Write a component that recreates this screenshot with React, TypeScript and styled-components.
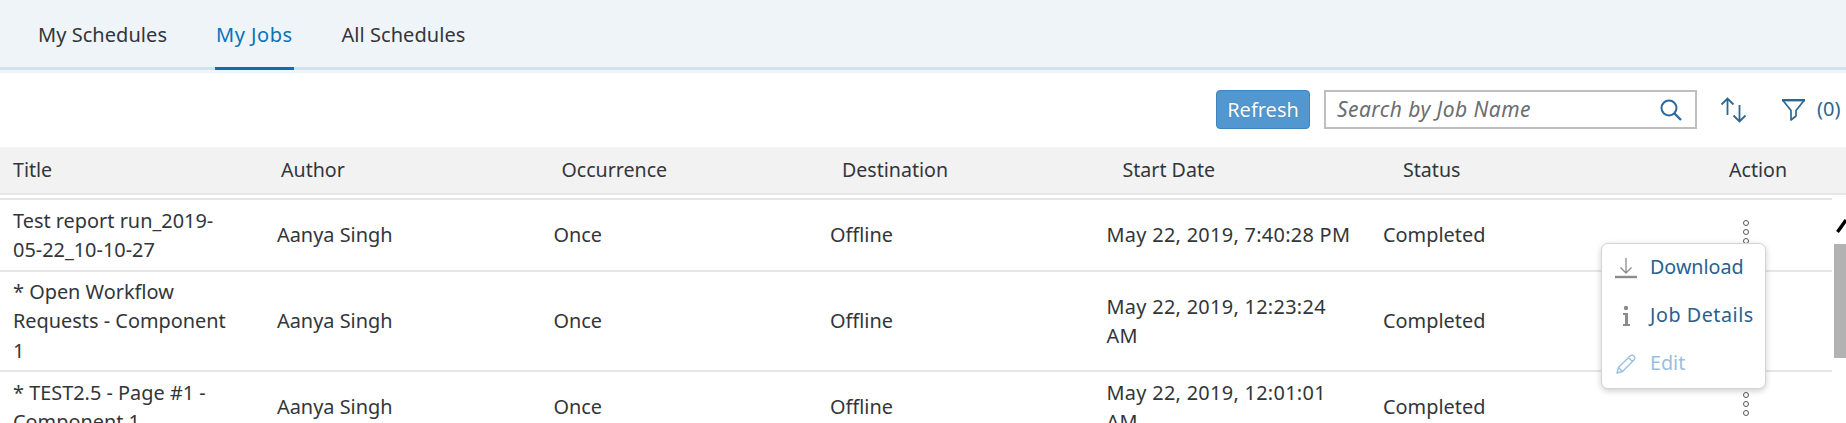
import React from "react";
import styled, { createGlobalStyle } from "styled-components";

const Global = createGlobalStyle`
  html, body { margin: 0; padding: 0; height: 423px; overflow: hidden; background: #fff; }
  body { font-family: "Noto Sans", "Open Sans", sans-serif; color: #32363a; }
  * { box-sizing: border-box; }
`;

const Page = styled.div`
  position: relative;
  width: 1846px;
  height: 423px;
  overflow: hidden;
  display: flex;
  flex-direction: column;
`;

const TabBar = styled.nav`
  height: 73px;
  flex: none;
  background: #eff4f9;
  padding-bottom: 3px;
  display: flex;
`;

const TabLine = styled.div`
  display: flex;
  gap: 47px;
  flex: 1;
  padding-left: 37px;
  border-bottom: 3px solid #d3e0ee;
`;

const Tab = styled.div<{ $active?: boolean }>`
  height: 70px;
  line-height: 70px;
  padding: 0 1px;
  font-size: 20px;
  white-space: nowrap;
  letter-spacing: ${(p) => (p.$active ? "0.5px" : "0.05px")};
  color: ${(p) => (p.$active ? "#0a72b8" : "#32363a")};
  border-bottom: 3px solid ${(p) => (p.$active ? "#0a6eb4" : "transparent")};
`;

const Toolbar = styled.div`
  height: 74px;
  flex: none;
  padding: 17px 5px 0 1216px;
  display: flex;
  align-items: flex-start;
`;

const RefreshButton = styled.button`
  width: 94px;
  height: 39px;
  padding: 0 0 1px;
  border: 1px solid #3f84bd;
  border-radius: 4px;
  background: #5297d0;
  color: #fff;
  font: 20px "Noto Sans", sans-serif;
  text-shadow: 0 0 1px rgba(0, 0, 0, 0.3);
`;

const SearchBox = styled.div`
  width: 373px;
  height: 39px;
  margin-left: 14px;
  border: 2px solid #bfbfbf;
  padding: 0 12px 0 11px;
  display: flex;
  align-items: center;
  justify-content: space-between;
`;

const Placeholder = styled.span`
  font-size: 21px;
  line-height: 28px;
  margin-top: -2px;
  letter-spacing: 0.45px;
  font-style: italic;
  color: #6a6d70;
`;

const IconButton = styled.span<{ $left: number }>`
  display: flex;
  align-items: center;
  height: 39px;
  margin-left: ${(p) => p.$left}px;
  color: #2b6a9c;
  font-size: 20px;
`;

const FilterCount = styled.span`
  margin-left: 12px;
  margin-top: -2px;
  color: #2f6690;
`;

const HeaderRow = styled.div`
  height: 48px;
  flex: none;
  background: #f2f2f2;
  border-bottom: 2px solid #e6e6e6;
  padding: 0 0 2px 13px;
  display: grid;
  grid-template-columns: 268px repeat(4, 280.5px) 326px 1fr;
  align-items: center;
  font-size: 19.6px;
  color: #32363a;
`;

const BodyWrap = styled.div`
  flex: 1;
  min-height: 0;
  display: flex;
  padding-top: 3px;
`;

const Rows = styled.div`
  width: 1832px;
  flex: none;
  border-top: 2px solid #e6e6e6;
`;

const Row = styled.div<{ $height: number }>`
  height: ${(p) => p.$height}px;
  flex: none;
  padding-left: 13px;
  display: grid;
  grid-template-columns: 264px repeat(4, 276.5px) 360px 1fr;
  align-items: center;
  font-size: 19.9px;
  line-height: 29.5px;
  border-bottom: 2px solid #e6e6e6;
`;

const TitleCell = styled.div`
  max-width: 222px;
`;

const DateCell = styled.div`
  max-width: 252px;
  letter-spacing: 0.3px;
`;

const Dots = styled.span`
  display: flex;
  flex-direction: column;
  gap: 3px;
  width: 6px;
  margin-top: -6px;
`;

const Dot = styled.i`
  display: block;
  width: 6px;
  height: 6px;
  border-radius: 50%;
  border: 1.7px solid #55585b;
`;

const Scrollbar = styled.div`
  flex: 1;
  padding: 20px 0 0 2px;
  display: flex;
  flex-direction: column;
`;

const Chevron = styled.svg`
  display: block;
  margin-bottom: 11px;
`;

const Thumb = styled.div`
  height: 114px;
  background: #b2b2b2;
`;

const Menu = styled.div`
  position: absolute;
  left: 1601px;
  top: 243px;
  width: 165px;
  height: 146px;
  background: #fff;
  border: 1px solid #d4d4d4;
  border-radius: 7px;
  box-shadow: 0 2px 6px rgba(0, 0, 0, 0.2);
  display: flex;
  flex-direction: column;
`;

const MenuItem = styled.div<{ $disabled?: boolean }>`
  height: 48.3px;
  display: flex;
  align-items: center;
  font-size: 19.7px;
  padding-left: 13px;
  color: ${(p) => (p.$disabled ? "#9abfde" : "#2b5f8f")};
`;

const MenuIcon = styled.span`
  width: 35px;
  flex: none;
  display: flex;
`;

const MenuLabel = styled.span<{ $wide?: boolean }>`
  margin-top: -3px;
  letter-spacing: ${(p) => (p.$wide ? "0.55px" : "0")};
`;

const rows = [
  { h: 72, title: "Test report run_2019-05-22_10-10-27", date: "May 22, 2019, 7:40:28 PM" },
  { h: 100, title: "* Open Workflow Requests - Component 1", date: "May 22, 2019, 12:23:24 AM" },
  { h: 72, title: "* TEST2.5 - Page #1 - Component 1", date: "May 22, 2019, 12:01:01 AM" },
];

export default function App() {
  return (
    <Page>
      <Global />
      <TabBar>
        <TabLine>
          <Tab>My Schedules</Tab>
          <Tab $active>My Jobs</Tab>
          <Tab>All Schedules</Tab>
        </TabLine>
      </TabBar>
      <Toolbar>
        <RefreshButton>Refresh</RefreshButton>
        <SearchBox>
          <Placeholder>Search by Job Name</Placeholder>
          <svg width="24" height="24" viewBox="0 0 24 24" fill="none" stroke="#2b6a9c" strokeWidth="2">
            <circle cx="10" cy="10" r="7.5" />
            <path d="M15.5 15.5L22 22" strokeWidth="2.4" />
          </svg>
        </SearchBox>
        <IconButton $left={23}>
          <svg width="27" height="26" viewBox="0 0 27 26" fill="none" stroke="#2f6690" strokeWidth="1.8">
            <path d="M7.5 18V1.5M1.5 7.5l6-6 6 6M19.5 8v16.5M13.5 18.5l6 6 6-6" />
          </svg>
        </IconButton>
        <IconButton $left={35}>
          <svg width="23" height="22" viewBox="0 0 23 22" fill="none" stroke="#2f6690" strokeLinejoin="round">
            <path d="M0 1.2h23" strokeWidth="2.4" />
            <path d="M1 1.5l8 10V21l5-4v-5.5l8-10" strokeWidth="1.7" />
          </svg>
          <FilterCount>(0)</FilterCount>
        </IconButton>
      </Toolbar>
      <HeaderRow>
        <div>Title</div>
        <div>Author</div>
        <div>Occurrence</div>
        <div>Destination</div>
        <div>Start Date</div>
        <div>Status</div>
        <div>Action</div>
      </HeaderRow>
      <BodyWrap>
        <Rows>
          {rows.map((r) => (
            <Row key={r.title} $height={r.h}>
              <TitleCell>{r.title}</TitleCell>
              <div>Aanya Singh</div>
              <div>Once</div>
              <div>Offline</div>
              <DateCell>{r.date}</DateCell>
              <div>Completed</div>
              <Dots>
                <Dot />
                <Dot />
                <Dot />
              </Dots>
            </Row>
          ))}
        </Rows>
        <Scrollbar>
          <Chevron width="12" height="15" viewBox="0 0 12 15" fill="none" stroke="#000" strokeWidth="3.4">
            <path d="M3.5 14L12 2" />
          </Chevron>
          <Thumb />
        </Scrollbar>
      </BodyWrap>
      <Menu>
        <MenuItem>
          <MenuIcon>
            <svg width="22" height="22" viewBox="0 0 22 22" fill="none" stroke="#8c8c8c">
              <path d="M11 1v15M5.5 10.5L11 16l5.5-5.5" strokeWidth="1.3" />
              <path d="M0 20h22" strokeWidth="2.4" />
            </svg>
          </MenuIcon>
          <MenuLabel>Download</MenuLabel>
        </MenuItem>
        <MenuItem>
          <MenuIcon>
            <svg width="22" height="22" viewBox="0 0 22 22" fill="#8c8c8c">
              <circle cx="11" cy="3" r="2.2" />
              <path d="M8 8h5v11h2v2H8v-2h2v-9H8z" />
            </svg>
          </MenuIcon>
          <MenuLabel $wide>Job Details</MenuLabel>
        </MenuItem>
        <MenuItem $disabled>
          <MenuIcon>
            <svg width="22" height="22" viewBox="0 0 22 22" fill="none" stroke="#9abfde" strokeWidth="1.4" strokeLinejoin="round">
              <path d="M2 20l1.5-5.5L15 3a2.4 2.4 0 0 1 4 4L7.5 18.5zM13.5 4.5l4 4M3.5 14.5l4 4" />
            </svg>
          </MenuIcon>
          <MenuLabel>Edit</MenuLabel>
        </MenuItem>
      </Menu>
    </Page>
  );
}
